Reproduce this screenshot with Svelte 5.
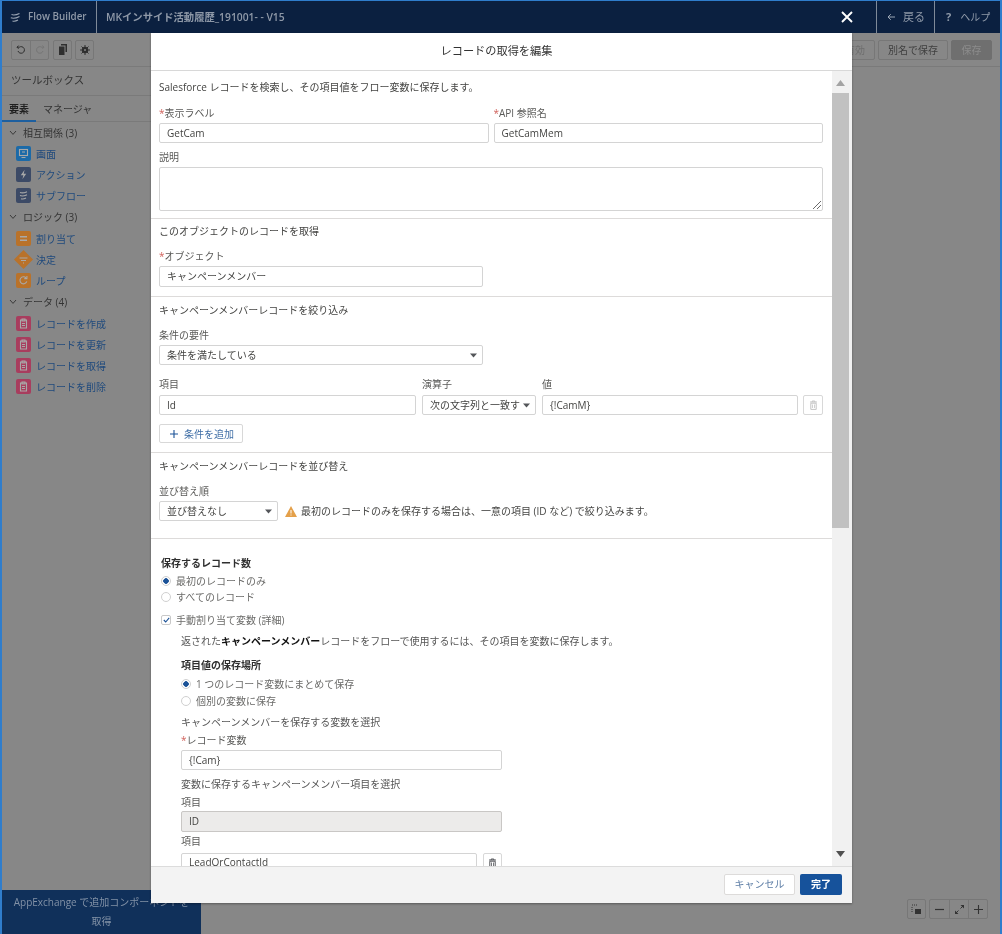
<script>
  // Flow Builder with the "edit get records" modal open over a dimmed page.
  const groups = [
    { name: '相互関係 (3)', items: [
      { label: '画面', icon: 'screen', color: '#1b6aa8' },
      { label: 'アクション', icon: 'bolt', color: '#3c4a66' },
      { label: 'サブフロー', icon: 'flow', color: '#3c4a66' }
    ] },
    { name: 'ロジック (3)', items: [
      { label: '割り当て', icon: 'equals', color: '#b9722a' },
      { label: '決定', icon: 'diamond', color: '#b9722a' },
      { label: 'ループ', icon: 'loop', color: '#b9722a' }
    ] },
    { name: 'データ (4)', items: [
      { label: 'レコードを作成', icon: 'clip', color: '#a83d5e' },
      { label: 'レコードを更新', icon: 'clip', color: '#a83d5e' },
      { label: 'レコードを取得', icon: 'clip', color: '#a83d5e' },
      { label: 'レコードを削除', icon: 'clip', color: '#a83d5e' }
    ] }
  ];
</script>

{#snippet trash()}
  <svg width="9" height="10" viewBox="0 0 9 10"><path d="M1 2h7M3.2 2V1h2.6v1M1.8 3.2h5.4V9.4H1.8z" fill="none" stroke="currentColor" stroke-width="1"/><path d="M3.5 4.5v3.5M5.5 4.5v3.5" stroke="currentColor" stroke-width=".8"/></svg>
{/snippet}

{#snippet caret()}
  <svg class="caret" width="7" height="5" viewBox="0 0 7 5"><path d="M0 .5h7L3.5 4.6z" fill="#54565a"/></svg>
{/snippet}

{#snippet glyph(name)}
  <svg width="15" height="15" viewBox="0 0 15 15" fill="none" stroke="#a9a9a9" stroke-width="1.1">
    {#if name === 'screen'}
      <rect x="3.5" y="3.5" width="8" height="6" /><path d="M5.5 11.5h4M6 6h3" />
    {:else if name === 'bolt'}
      <path d="M8.6 2.8 4.8 8.2h2.6L6.4 12.2l3.8-5.4H7.7z" fill="#a9a9a9" stroke="none" />
    {:else if name === 'flow'}
      <path d="M4 4.5c3 1 5 0 7-.8M4 7.6c3 1 5 0 7-.8M5 10.8c2 .7 3.6 0 5-.7" />
    {:else if name === 'equals'}
      <path d="M4 5.8h7M4 9.2h7" stroke-width="1.4" />
    {:else if name === 'loop'}
      <path d="M10.8 8.4a3.5 3.5 0 1 1-.8-3.5" /><path d="M10.9 3v2.6H8.3" />
    {:else}
      <path d="M4.5 4h6v8h-6z" /><path d="M6 3h3v2H6zM6 7.5h3M6 9.5h3" />
    {/if}
  </svg>
{/snippet}

<div class="page">
  <header class="topbar">
    <div class="brand">
      <svg width="11" height="11" viewBox="0 0 11 11" fill="none" stroke="#9aa5b4" stroke-width="1.1"><path d="M1.5 2.6c3 1 5.500 0 8-1.200M.8 5.800c3 1 6 0 8.700-1.400M2.500 9c2 .6 3.700 0 5.500-1" /></svg>
      <span>Flow Builder</span>
    </div>
    <div class="doc-title">MKインサイド活動履歴_191001- - V15</div>
    <button class="close" aria-label="閉じる">
      <svg width="12" height="12" viewBox="0 0 12 12"><path d="M1 1l10 10M11 1 1 11" stroke="#fff" stroke-width="1.900" /></svg>
    </button>
    <div class="top-link back">
      <svg width="8" height="8" viewBox="0 0 8 8" fill="none" stroke="#9aa5b4"><path d="M8 4H1M3.800 1.200 1 4l2.800 2.800" /></svg>
      <span>戻る</span>
    </div>
    <div class="top-link help"><b>?</b><span>ヘルプ</span></div>
  </header>

  <div class="main">
    <aside class="sidebar">
      <div class="toolbar left-tools">
        <div class="btn-group">
          <span class="tool first">
            <svg width="10" height="10" viewBox="0 0 10 10" fill="none" stroke="#2f2f2f"><path d="M2 6a3.300 3.300 0 1 0 1.300-3.800H1M2.600.6 1 2.200l1.600 1.600" /></svg>
          </span>
          <span class="tool">
            <svg width="10" height="10" viewBox="0 0 10 10" fill="none" stroke="#767676"><path d="M8 6A3.300 3.300 0 1 1 6.700 2.200H9M7.400.6 9 2.200 7.400 3.800" /></svg>
          </span>
        </div>
        <span class="tool solo">
          <svg width="10" height="11" viewBox="0 0 10 11"><path d="M3 0h6v8H7.500V1.500H3z M1 2.500h5.500V11H1z" fill="#2f2f2f" /></svg>
        </span>
        <span class="tool solo">
          <svg width="10" height="10" viewBox="0 0 10 10"><circle cx="5" cy="5" r="3.200" fill="#2f2f2f" /><path d="M5 0v10M0 5h10M1.500 1.500l7 7M8.500 1.500l-7 7" stroke="#2f2f2f" stroke-width="1" /><circle cx="5" cy="5" r="1" fill="#878787" /></svg>
        </span>
      </div>
      <div class="toolbox-title">ツールボックス</div>
      <div class="tabs">
        <span class="tab active">要素</span>
        <span class="tab">マネージャ</span>
      </div>
      <nav class="palette">
        {#each groups as group}
          <div class="group-name">
            <svg width="8" height="6" viewBox="0 0 8 6" fill="none" stroke="#3a3a3a"><path d="M1 1l3 3.400L7 1" /></svg>
            <span>{group.name}</span>
          </div>
          {#each group.items as item}
            <div class="item">
              {#if item.icon === 'diamond'}
                <span class="icon">
                  <svg class="over" width="19" height="19" viewBox="0 0 19 19"><path d="M9.500 0 19 9.500 9.500 19 0 9.500z" fill={item.color} /><path d="M5.500 8h8M7 10.500h5M9 13h1" stroke="#a9a9a9" stroke-width="1.100" /></svg>
                </span>
              {:else}
                <span class="icon square" style:background={item.color}>
                  {@render glyph(item.icon)}
                </span>
              {/if}
              <span class="item-label">{item.label}</span>
            </div>
          {/each}
        {/each}
      </nav>
      <div class="exchange">AppExchange で追加コンポーネントを取得</div>
    </aside>

    <section class="canvas">
      <div class="toolbar right-tools">
        <span class="ghost">有効</span>
        <span class="ghost">別名で保存</span>
        <span class="ghost save">保存</span>
      </div>
      <div class="zoom-tools">
        <span class="tool solo">
          <svg width="11" height="11" viewBox="0 0 11 11"><path d="M1 1h6M1 3v5M4 9h1" stroke="#333" stroke-dasharray="1 1" fill="none"/><path d="M4 5h6v5H4z" fill="#333" /></svg>
        </span>
        <div class="btn-group">
          <span class="tool first"><svg width="9" height="9" viewBox="0 0 9 9"><path d="M0 4.500h9" stroke="#333" stroke-width="1.200"/></svg></span>
          <span class="tool"><svg width="9" height="9" viewBox="0 0 9 9"><path d="M1 8l2.500-2.500M8 1 5.500 3.500" stroke="#333" stroke-width="1"/><path d="M5.500 0H9v3.500zM0 5.500V9h3.500z" fill="#333"/></svg></span>
          <span class="tool"><svg width="9" height="9" viewBox="0 0 9 9"><path d="M0 4.500h9M4.500 0v9" stroke="#333" stroke-width="1.100"/></svg></span>
        </div>
      </div>
    </section>
  </div>

  <div class="modal" role="dialog" aria-label="レコードの取得を編集">
    <div class="modal-head">レコードの取得を編集</div>
    <div class="modal-mid">
      <div class="modal-body">
        <section class="sec s1">
          <p class="line">Salesforce レコードを検索し、その項目値をフロー変数に保存します。</p>
          <div class="two mt14">
            <div>
              <div class="label"><i>*</i>表示ラベル</div>
              <div class="input mt4">GetCam</div>
            </div>
            <div>
              <div class="label"><i>*</i>API 参照名</div>
              <div class="input mt4">GetCamMem</div>
            </div>
          </div>
          <div class="label mt8">説明</div>
          <div class="input area mt4">
            <svg class="grip" width="10" height="10" viewBox="0 0 10 10"><path d="M9 1 1 9M9 5 5 9" stroke="#6b6b6b" /></svg>
          </div>
        </section>

        <section class="sec s2">
          <p class="line">このオブジェクトのレコードを取得</p>
          <div class="label mt13"><i>*</i>オブジェクト</div>
          <div class="input tall w-object mt4">キャンペーンメンバー</div>
        </section>

        <section class="sec s3">
          <p class="line">キャンペーンメンバーレコードを絞り込み</p>
          <div class="label mt13">条件の要件</div>
          <div class="input select w-object mt4">条件を満たしている{@render caret()}</div>
          <div class="cond mt13">
            <div class="label">項目</div>
            <div class="label">演算子</div>
            <div class="label">値</div>
            <span></span>
          </div>
          <div class="cond inputs mt5">
            <div class="input">Id</div>
            <div class="input select clip">次の文字列と一致す{@render caret()}</div>
            <div class="input">&#123;!CamM&#125;</div>
            <span class="icon-btn faint">{@render trash()}</span>
          </div>
          <button class="add mt9">
            <svg width="8" height="8" viewBox="0 0 8 8"><path d="M0 4h8M4 0v8" stroke="#1b5297" stroke-width="1.100" /></svg>
            条件を追加
          </button>
        </section>

        <section class="sec s4">
          <p class="line">キャンペーンメンバーレコードを並び替え</p>
          <div class="label mt13">並び替え順</div>
          <div class="sort mt4">
            <div class="input select w-sort">並び替えなし{@render caret()}</div>
            <svg width="12" height="11" viewBox="0 0 12 11"><path d="M6 0 12 11H0z" fill="#e4a04a" /><path d="M6 4v3.500M6 8.500v1" stroke="#fff" stroke-width="1" /></svg>
            <span class="line">最初のレコードのみを保存する場合は、一意の項目 (ID など) で絞り込みます。</span>
          </div>
        </section>

        <section class="sec s5">
          <div class="heading">保存するレコード数</div>
          <label class="opt mt6"><span class="radio on"></span>最初のレコードのみ</label>
          <label class="opt mt4"><span class="radio"></span>すべてのレコード</label>
          <label class="opt mt11">
            <span class="check"><svg width="7" height="6" viewBox="0 0 7 6" fill="none"><path d="M.8 3 2.700 5 6.200.8" stroke="#1b5297" stroke-width="1.100" /></svg></span>
            手動割り当て変数 (詳細)
          </label>
          <div class="nested">
            <p class="line mt9">返された<b>キャンペーンメンバー</b>レコードをフローで使用するには、その項目を変数に保存します。</p>
            <div class="heading mt12">項目値の保存場所</div>
            <label class="opt mt7"><span class="radio on"></span>1 つのレコード変数にまとめて保存</label>
            <label class="opt mt5"><span class="radio"></span>個別の変数に保存</label>
            <p class="line mt9">キャンペーンメンバーを保存する変数を選択</p>
            <div class="label mt6"><i>*</i>レコード変数</div>
            <div class="input w-var mt4">&#123;!Cam&#125;</div>
            <p class="line mt8">変数に保存するキャンペーンメンバー項目を選択</p>
            <div class="label mt6">項目</div>
            <div class="input tall disabled w-var mt3">ID</div>
            <div class="label mt3">項目</div>
            <div class="last-row mt6">
              <div class="input">LeadOrContactId</div>
              <span class="icon-btn">{@render trash()}</span>
            </div>
          </div>
        </section>
      </div>
      <div class="scrollbar">
        <svg width="9" height="6" viewBox="0 0 9 6"><path d="M4.500 0 9 6H0z" fill="#a3a3a3" /></svg>
        <div class="track"><div class="thumb"></div></div>
        <svg width="9" height="6" viewBox="0 0 9 6"><path d="M0 0h9L4.500 6z" fill="#505050" /></svg>
      </div>
    </div>
    <footer class="modal-foot">
      <button class="cancel">キャンセル</button>
      <button class="done">完了</button>
    </footer>
  </div>
</div>

<style>
  :global(body) {
    margin: 0;
    background: #878787;
  }
  .page {
    position: relative;
    box-sizing: border-box;
    width: 1002px;
    height: 934px;
    overflow: hidden;
    display: flex;
    flex-direction: column;
    border: solid #2f7dcc;
    border-width: 1px 2px 0 2px;
    background: #878787;
    color: #444442;
    font: 10px/12px "Open Sans", "Noto Sans CJK JP", sans-serif;
    /* the reference is a slightly soft, rescaled capture */
    filter: blur(.35px);
  }

  /* top bar */
  .topbar {
    height: 32px;
    flex: none;
    display: flex;
    align-items: center;
    background: #0b2040;
    color: #8f99a8;
  }
  .brand {
    width: 95px;
    height: 100%;
    box-sizing: border-box;
    padding-left: 8px;
    display: flex;
    align-items: center;
    gap: 7px;
    font-size: 9.800px;
    font-weight: 600;
    border-right: 1px solid #7f8a99;
  }
  .doc-title {
    margin-left: 9px;
    font-size: 10.300px;
    font-weight: 600;
    flex: 1;
  }
  .close {
    width: 12px;
    height: 12px;
    padding: 0;
    border: 0;
    background: none;
    margin-right: 23px;
    display: flex;
  }
  .top-link {
    height: 100%;
    box-sizing: border-box;
    display: flex;
    align-items: center;
    border-left: 1px solid #7f8a99;
  }
  .back {
    width: 58px;
    padding-left: 10px;
    gap: 8px;
    font-size: 11px;
  }
  .help {
    width: 66px;
    padding-left: 11px;
    gap: 9px;
  }
  .help b {
    font-size: 11px;
  }

  .main {
    flex: 1;
    min-height: 0;
    display: flex;
  }
  .toolbar {
    height: 34px;
    box-sizing: border-box;
    display: flex;
    align-items: center;
    border-bottom: 1px solid #7a7a7a;
    flex: none;
  }

  /* sidebar */
  .sidebar {
    width: 199px;
    display: flex;
    flex-direction: column;
    flex: none;
  }
  .left-tools {
    padding-left: 9px;
    gap: 4px;
  }
  .btn-group {
    display: flex;
    border: 1px solid #777;
    border-radius: 2px;
  }
  .tool {
    box-sizing: border-box;
    width: 18px;
    height: 18px;
    display: flex;
    align-items: center;
    justify-content: center;
    border-left: 1px solid #777;
  }
  .tool.first {
    border-left: 0;
  }
  .tool.solo {
    width: 19px;
    height: 20px;
    border: 1px solid #777;
    border-radius: 2px;
  }
  .tool.solo + .tool.solo {
    margin-left: -1px;
  }
  .toolbox-title {
    height: 28px;
    line-height: 26px;
    padding-left: 9px;
    font-size: 10.500px;
    color: #333;
    border-bottom: 1px solid #7a7a7a;
  }
  .tabs {
    height: 25px;
    display: flex;
    align-items: center;
    border-bottom: 1px solid #7a7a7a;
    color: #333;
  }
  .tab {
    height: 100%;
    line-height: 26px;
    box-sizing: border-box;
    padding: 0 7px;
  }
  .tab.active {
    font-weight: 700;
    color: #1f1f1f;
    border-bottom: 2px solid #1d5f9f;
    margin-bottom: -1px;
    height: 26px;
  }
  .group-name {
    height: 21px;
    display: flex;
    align-items: center;
    gap: 6px;
    padding-left: 7px;
    color: #333;
  }
  .group-name:not(:first-child) {
    height: 22px;
    padding-bottom: 1px;
    box-sizing: border-box;
  }
  .item {
    height: 21px;
    display: flex;
    align-items: center;
    gap: 5px;
    padding-left: 14px;
    color: #1f4a7d;
  }
  .icon {
    position: relative;
    width: 15px;
    height: 15px;
    flex: none;
    border-radius: 2px;
  }
  .icon.square {
    display: flex;
  }
  .over {
    position: absolute;
    left: -2px;
    top: -2px;
  }
  .exchange {
    margin-top: auto;
    height: 44px;
    box-sizing: border-box;
    padding: 3px 8px 0;
    text-align: center;
    line-height: 19px;
    background: #10305a;
    color: #8291a6;
  }

  /* canvas */
  .canvas {
    flex: 1;
    position: relative;
  }
  .right-tools {
    justify-content: flex-end;
    gap: 3px;
    padding-right: 8px;
  }
  .ghost {
    height: 20px;
    line-height: 18px;
    box-sizing: border-box;
    padding: 0 9px;
    border: 1px solid #777;
    border-radius: 2px;
    color: #3f3f3f;
  }
  .ghost.save {
    padding: 0;
    text-align: center;
    background: #6f6f6f;
    border-color: #6f6f6f;
    color: #8c8c8c;
    width: 41px;
  }
  .ghost:first-child {
    color: #6e6e6e;
  }
  .zoom-tools {
    position: absolute;
    right: 12px;
    bottom: 15px;
    display: flex;
    gap: 3px;
  }
  .zoom-tools .tool:not(.solo) {
    width: 19px;
  }

  /* modal */
  .modal {
    position: absolute;
    left: 149px;
    top: 32px;
    width: 701px;
    height: 870px;
    display: flex;
    flex-direction: column;
    background: #fff;
    box-shadow: 0 1px 2px rgba(0, 0, 0, .35);
  }
  .modal-head {
    height: 38px;
    flex: none;
    box-sizing: border-box;
    border-bottom: 1px solid #d8d8d8;
    padding-right: 10px;
    text-align: center;
    line-height: 35px;
    font-size: 11.200px;
    color: #333;
  }
  .modal-mid {
    flex: 1;
    min-height: 0;
    display: flex;
  }
  .modal-body {
    flex: 1;
    min-width: 0;
    overflow: hidden;
  }
  .scrollbar {
    width: 20px;
    flex: none;
    box-sizing: border-box;
    padding: 9px 3px 9px 0;
    background: #f1f1f1;
    display: flex;
    flex-direction: column;
    align-items: center;
  }
  .track {
    flex: 1;
    align-self: stretch;
    padding-top: 7px;
  }
  .thumb {
    height: 435px;
    background: #c1c1c1;
  }
  .modal-foot {
    height: 37px;
    flex: none;
    box-sizing: border-box;
    border-top: 1px solid #dcdcdc;
    background: #f3f3f3;
    display: flex;
    justify-content: flex-end;
    align-items: center;
    gap: 5px;
    padding: 0 10px 2px 0;
  }
  button {
    font: inherit;
    cursor: pointer;
  }
  .cancel {
    width: 71px;
    height: 21px;
    padding: 0;
    border: 1px solid #dddbda;
    border-radius: 2px;
    background: #fff;
    color: #5e7ea6;
  }
  .done {
    width: 42px;
    height: 21px;
    padding: 0;
    border: 0;
    border-radius: 2px;
    background: #16529b;
    color: #fff;
    font-weight: 700;
  }

  /* form */
  .sec {
    box-sizing: border-box;
    padding: 0 9px 0 8px;
    border-bottom: 1px solid #dddbda;
  }
  .s1 { padding-top: 10px; padding-bottom: 7px; }
  .s2 { padding-top: 6px; padding-bottom: 9px; }
  .s3 { padding-top: 7px; padding-bottom: 9px; }
  .s4 { padding-top: 7px; padding-bottom: 17px; }
  .s5 { padding: 18px 10px 0; border-bottom: 0; }
  .line {
    margin: 0;
  }
  .line b {
    color: #111;
  }
  .label {
    color: #5a5a58;
  }
  .label i {
    color: #d0605a;
    font-style: normal;
  }
  .two {
    display: grid;
    grid-template-columns: 1fr 1fr;
    gap: 5px;
  }
  .input {
    position: relative;
    box-sizing: border-box;
    height: 20px;
    line-height: 18px;
    padding: 0 7px;
    border: 1px solid #d4d4d4;
    border-radius: 2px;
    background: #fff;
    color: #444442;
    white-space: nowrap;
  }
  .input.tall {
    height: 21px;
    line-height: 19px;
  }
  .input.area {
    height: 44px;
  }
  .grip {
    position: absolute;
    right: 0;
    bottom: 0;
  }
  .disabled {
    background: #ecebea;
    border-color: #c9c7c5;
  }
  .w-object { width: 324px; }
  .w-sort { width: 119px; }
  .w-var { width: 321px; }
  .select {
    overflow: hidden;
  }
  .caret {
    position: absolute;
    right: 5px;
    top: 7px;
  }
  .cond {
    display: grid;
    grid-template-columns: 257px 114px 256px 19px;
    gap: 6px;
  }
  .icon-btn {
    box-sizing: border-box;
    width: 20px;
    height: 20px;
    display: flex;
    align-items: center;
    justify-content: center;
    border: 1px solid #d8d8d8;
    border-radius: 2px;
    color: #54565a;
    flex: none;
  }
  .icon-btn.faint {
    margin-left: -1px;
    color: #c4c4c4;
  }
  .add {
    display: flex;
    align-items: center;
    gap: 6px;
    width: 84px;
    height: 19px;
    box-sizing: border-box;
    padding: 0 0 0 10px;
    border: 1px solid #d8d8d8;
    border-radius: 2px;
    background: #fff;
    color: #3f6ea6;
    white-space: nowrap;
  }
  .sort {
    display: flex;
    align-items: center;
    gap: 4px;
  }
  .sort svg:not(.caret) {
    margin-left: 3px;
  }
  .heading {
    font-weight: 700;
    color: #2f2f2f;
  }
  .opt {
    display: flex;
    align-items: center;
    gap: 5px;
    color: #6a6a68;
  }
  .radio {
    box-sizing: border-box;
    width: 10px;
    height: 10px;
    border-radius: 50%;
    border: 1px solid #d0d0d0;
    background: #fff;
    flex: none;
  }
  .radio.on {
    background: radial-gradient(circle, #1b5297 0 2.500px, #fff 3px);
  }
  .check {
    box-sizing: border-box;
    width: 10px;
    height: 10px;
    border: 1px solid #c8c8c8;
    border-radius: 2px;
    display: flex;
    align-items: center;
    justify-content: center;
    flex: none;
  }
  .nested {
    padding-left: 20px;
  }
  .nested .line {
    color: #555;
  }
  .last-row {
    display: flex;
    gap: 6px;
    width: 321px;
  }
  .last-row .input {
    flex: 1;
    line-height: 16px;
  }
  .last-row .icon-btn {
    width: 19px;
  }
  .mt3 { margin-top: 3px; }
  .mt4 { margin-top: 4px; }
  .mt5 { margin-top: 5px; }
  .mt6 { margin-top: 6px; }
  .mt7 { margin-top: 7px; }
  .mt8 { margin-top: 8px; }
  .mt9 { margin-top: 9px; }
  .mt11 { margin-top: 11px; }
  .mt12 { margin-top: 12px; }
  .mt13 { margin-top: 13px; }
  .mt14 { margin-top: 14px; }
</style>
